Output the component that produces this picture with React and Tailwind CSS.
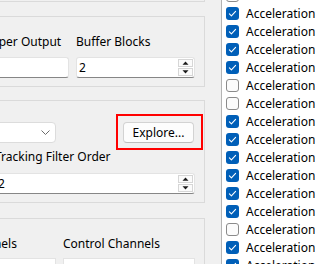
import React from "react";

const checks = [false, true, true, true, true, false, false, true, true, true, true, true, true, false, true, true];

function CheckBox({ on }) {
  if (on) {
    return (
      <div className="w-[13px] h-[13px] rounded-[3px] bg-[#005fb8] flex items-center justify-center shrink-0">
        <svg width="13" height="13" viewBox="0 0 13 13">
          <path d="M3.4 6.9 L5.4 8.8 L9.6 4.4" fill="none" stroke="#ffffff" strokeWidth="1.1" strokeLinecap="round" strokeLinejoin="round" />
        </svg>
      </div>
    );
  }
  return <div className="w-[13px] h-[13px] rounded-[3px] border border-[#8a8a8a] bg-[#fbfbfb] shrink-0" />;
}

function Arrow({ up }) {
  return (
    <svg width="7" height="4" viewBox="0 0 7 4">
      {up ? <path d="M0.5 3.8 L3.5 0.5 L6.5 3.8 Z" fill="#1a1a1a" /> : <path d="M0.5 0.2 L3.5 3.5 L6.5 0.2 Z" fill="#1a1a1a" />}
    </svg>
  );
}

function SpinBox({ value, className }) {
  return (
    <div className={"h-[21px] bg-white border border-[#e3e3e3] border-b-[#868686] rounded-[3px] flex items-center pl-[2px] pr-[1px] " + className}>
      <span className="flex-1 leading-[16px]">{value}</span>
      <div className="w-[15px] h-[17px] flex flex-col gap-[1px]">
        <div className="flex-1 border border-[#d6d6d6] bg-[#fbfbfb] flex items-center justify-center">
          <Arrow up />
        </div>
        <div className="flex-1 border border-[#d6d6d6] bg-[#fbfbfb] flex items-center justify-center">
          <Arrow />
        </div>
      </div>
    </div>
  );
}

export default function App() {
  return (
    <div className="w-[315px] h-[264px] overflow-hidden bg-[#f0f0f0] flex font-['Noto_Sans',sans-serif] text-[12px] text-[#000000]">
      {/* Left settings panel */}
      <div className="w-[221px] shrink-0 overflow-hidden">
        <div className="w-[305px] -ml-[100px] flex flex-col">
          {/* Box 1 */}
          <div className="h-[40px] -mt-[38px] border border-[#dadada]" />

          {/* Box 2 */}
          <div className="mt-[14px] border border-[#dadada] pr-[9px] pt-[17px] pb-[8px] flex justify-end gap-[7px]">
            <div className="w-[118px] flex flex-col">
              <div className="leading-[16px] whitespace-nowrap -ml-[3px]">Samples per Output</div>
              <div className="mt-[7px] h-[21px] bg-white border border-[#e3e3e3] border-b-[#868686] rounded-[3px]" />
            </div>
            <div className="w-[119px] flex flex-col">
              <div className="leading-[16px] whitespace-nowrap">Buffer Blocks</div>
              <SpinBox value="2" className="mt-[7px]" />
            </div>
          </div>

          {/* Box 3 */}
          <div className="mt-[13px] border border-[#dadada] pr-[9px] pt-[21px] pb-[8px] flex flex-col items-end">
            <div className="flex gap-[7px]">
              <div className="w-[120px] h-[21px] bg-white border border-[#dcdcdc] rounded-[4px] flex items-center justify-end pr-[4px]">
                <svg width="9" height="5" viewBox="0 0 9 5" className="mr-[1px]">
                  <path d="M0.5 0.5 L4.5 4.5 L8.5 0.5" fill="none" stroke="#6b6b6b" strokeWidth="1" />
                </svg>
              </div>
              <div className="w-[132px] flex justify-end">
                <div className="relative mr-[1px]">
                  <button className="w-[71px] h-[21px] bg-[#fdfdfd] border border-[#d3d3d3] border-b-[#bdbdbd] rounded-[4px] flex items-center justify-center leading-[16px]">
                    Explore...
                  </button>
                  <div className="absolute -left-[7px] -top-[8px] w-[87px] h-[36px] border-2 border-[#ff0000]" />
                </div>
              </div>
            </div>
            <div className="w-[200px] mt-[6px] leading-[16px] whitespace-nowrap">Tracking Filter Order</div>
            <SpinBox value="2" className="w-[200px] mt-[8px]" />
          </div>

          {/* Box 4 */}
          <div className="mt-[15px] h-[80px] border border-[#dadada] pr-[9px] pt-[17px] flex justify-end gap-[7px]">
            <div className="w-[120px] flex flex-col">
              <div className="leading-[16px] whitespace-nowrap -ml-[5px]">Input Channels</div>
              <div className="mt-[6px] flex-1 bg-white border border-[#e3e3e3]" />
            </div>
            <div className="w-[132px] flex flex-col">
              <div className="leading-[16px] whitespace-nowrap">Control Channels</div>
              <div className="mt-[6px] flex-1 bg-white border border-[#e3e3e3]" />
            </div>
          </div>
        </div>
      </div>

      {/* Right checkbox list */}
      <div className="flex-1 bg-white border-l border-[#b4b4b4] overflow-hidden">
        <div className="-mt-[13px] flex flex-col">
          {checks.map((on, i) => (
            <div key={i} className="h-[18px] flex items-start pl-[4px] shrink-0">
              <div className="mt-[2px]">
                <CheckBox on={on} />
              </div>
              <span className="ml-[7px] leading-[18px] whitespace-nowrap">Acceleration</span>
            </div>
          ))}
        </div>
      </div>
    </div>
  );
}
